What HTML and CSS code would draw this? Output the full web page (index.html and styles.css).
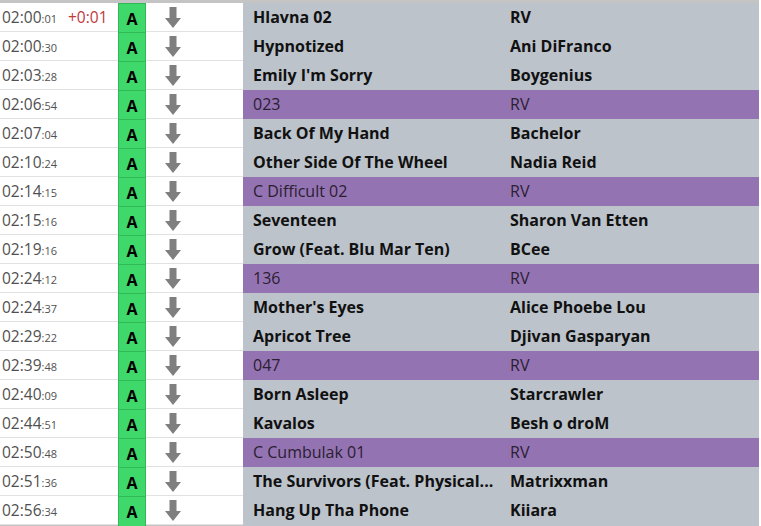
FILE: index.html
```html
<!DOCTYPE html>
<html>
<head>
<meta charset="utf-8">
<link rel="stylesheet" href="styles.css">
</head>
<body>
<div class="list">
  <div class="topbar"></div>
  <div id="rows"></div>
  <div class="bottombar"></div>
</div>
<script>
const data = [
  ["02:00","01","+0:01","Hlavna 02","RV",0],
  ["02:00","30","","Hypnotized","Ani DiFranco",0],
  ["02:03","28","","Emily I'm Sorry","Boygenius",0],
  ["02:06","54","","023","RV",1],
  ["02:07","04","","Back Of My Hand","Bachelor",0],
  ["02:10","24","","Other Side Of The Wheel","Nadia Reid",0],
  ["02:14","15","","C Difficult 02","RV",1],
  ["02:15","16","","Seventeen","Sharon Van Etten",0],
  ["02:19","16","","Grow (Feat. Blu Mar Ten)","BCee",0],
  ["02:24","12","","136","RV",1],
  ["02:24","37","","Mother's Eyes","Alice Phoebe Lou",0],
  ["02:29","22","","Apricot Tree","Djivan Gasparyan",0],
  ["02:39","48","","047","RV",1],
  ["02:40","09","","Born Asleep","Starcrawler",0],
  ["02:44","51","","Kavalos","Besh o droM",0],
  ["02:50","48","","C Cumbulak 01","RV",1],
  ["02:51","36","","The Survivors (Feat. Physical...","Matrixxman",0],
  ["02:56","34","","Hang Up Tha Phone","Kiiara",0]
];
const arrow = '<svg width="16" height="22" viewBox="0 0 16 22"><path d="M4.5 0H11.5V11H16L8 21L0 11H4.5Z" fill="#7f7f7f"/></svg>';
let html = "";
for (const r of data) {
  const kind = r[5] ? " special" : " song";
  html += '<div class="row' + kind + '">' +
    '<div class="time"><span class="hm">' + r[0] + '</span><span class="sec">:' + r[1] + '</span>' +
    (r[2] ? '<span class="offset">' + r[2] + '</span>' : '') + '</div>' +
    '<div class="badge">A</div>' +
    '<div class="arrow">' + arrow + '</div>' +
    '<div class="title">' + r[3] + '</div>' +
    '<div class="artist">' + r[4] + '</div>' +
    '</div>';
}
document.getElementById("rows").innerHTML = html;
</script>
</body>
</html>
```
FILE: styles.css
```css
html, body {
  margin: 0;
  padding: 0;
  background: #ffffff;
}
body {
  font-family: "Open Sans", "Noto Sans", sans-serif;
  width: 761px;
  height: 526px;
  overflow: hidden;
}
.list {
  width: 759px;
}
.topbar {
  height: 3px;
  background: #c4c4c4;
}
.bottombar {
  height: 2px;
  background: #c4c4c4;
}
.row {
  display: grid;
  grid-template-columns: 118px 28px 97px 257px 1fr;
  height: 28px;
  border-bottom: 1px solid #e2e2e2;
}
.time {
  display: flex;
  align-items: baseline;
  padding-left: 2px;
  line-height: 28px;
  color: #505050;
  white-space: nowrap;
}
.hm {
  font-size: 15.5px;
}
.sec {
  font-size: 11px;
}
.offset {
  margin-left: 11px;
  color: #c0393b;
  font-size: 15.5px;
}
.badge {
  background: #3fd86a;
  border: 1px solid #2fb957;
  box-sizing: border-box;
  margin-bottom: -1px;
  display: flex;
  align-items: center;
  justify-content: center;
  font-weight: 700;
  font-size: 16px;
  color: #000;
}
.arrow {
  display: flex;
  align-items: center;
  padding-left: 19px;
}
.arrow svg {
  display: block;
}
.title, .artist {
  display: block;
  line-height: 28px;
  padding-left: 10px;
  font-size: 16px;
  color: #111;
  white-space: nowrap;
  overflow: hidden;
  min-width: 0;
}
.song .title, .song .artist {
  background: #bcc3cb;
  font-weight: 700;
}
.special .title, .special .artist {
  background: #9473b3;
  font-weight: 400;
  color: #2a2030;
}
```
